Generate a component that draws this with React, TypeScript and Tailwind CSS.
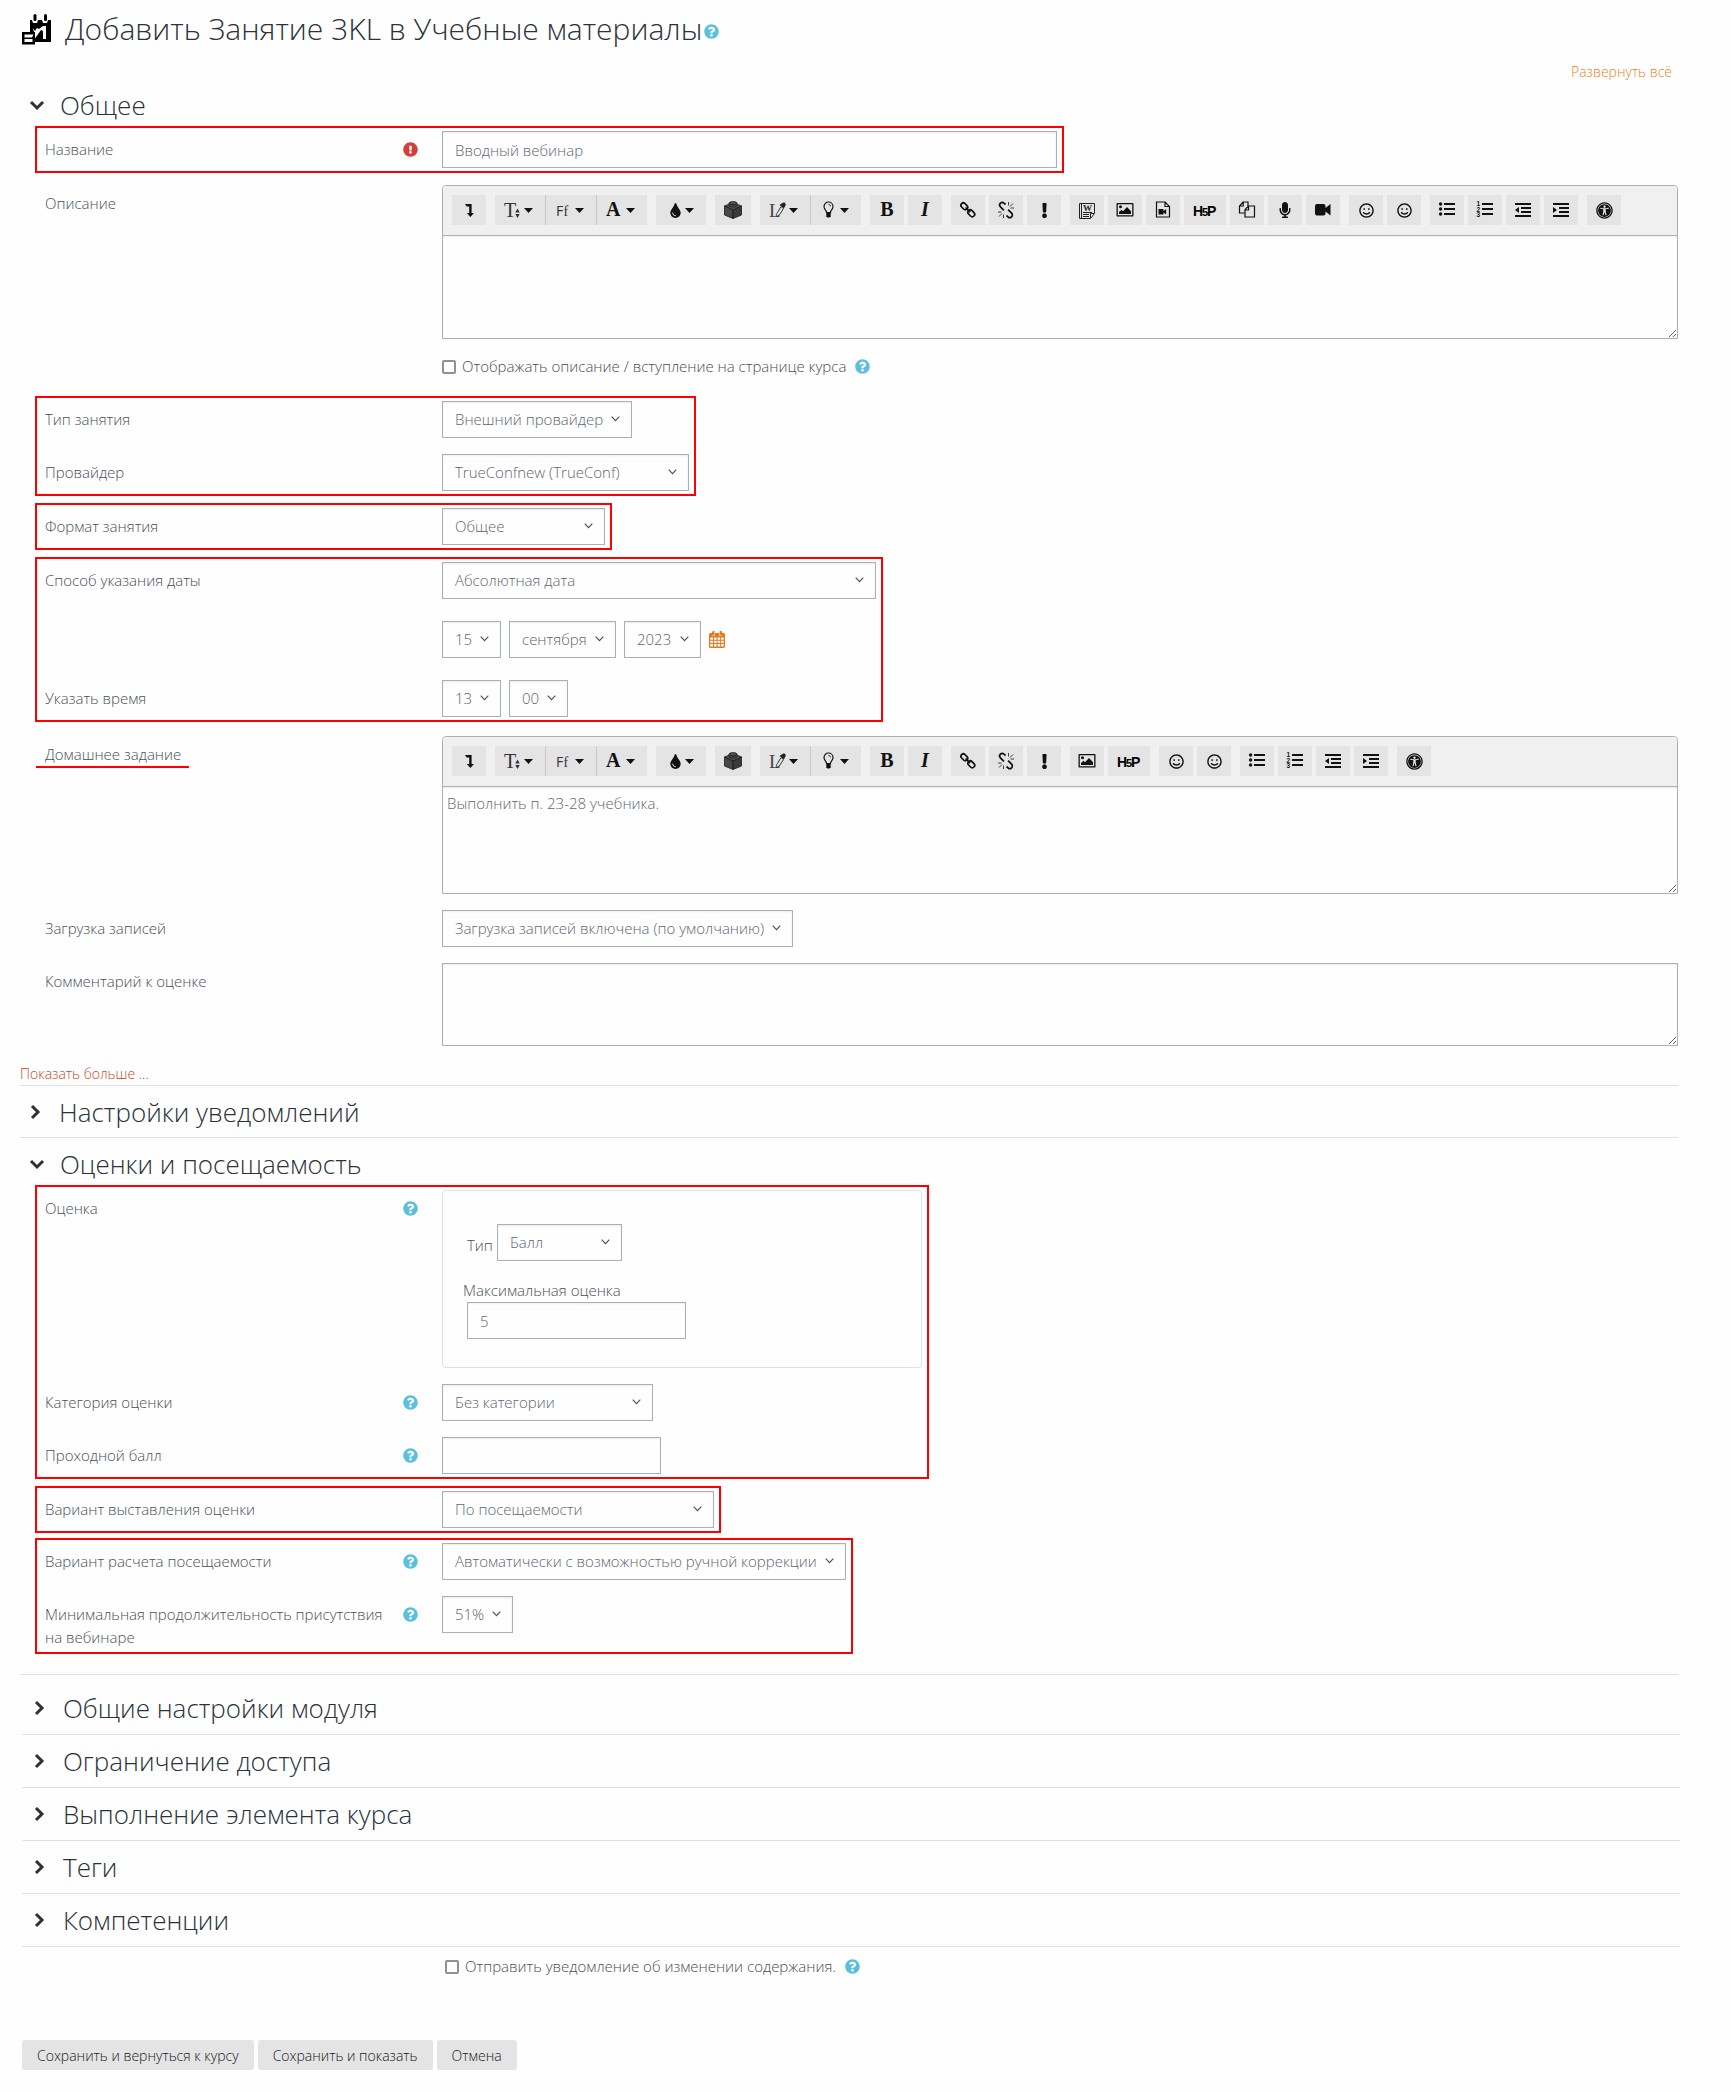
import type { ReactNode } from "react";
import { FaExclamation, FaExclamationCircle, FaMicrophone, FaQuestionCircle, FaRegSmile, FaTint, FaUniversalAccess } from "react-icons/fa";

function Help() {
  return (
    <button type="button" aria-label="Справка" className="shrink-0 text-[#5bc0de]">
      <FaQuestionCircle size={15} />
    </button>
  );
}

function Row({ label, id, icon, underline, children }: { label?: string; id?: string; icon?: ReactNode; underline?: boolean; children: ReactNode }) {
  return (
    <div className="flex items-start">
      <div className="flex w-[397px] shrink-0 items-start justify-between gap-3 pt-[7px] pr-6">
        <label htmlFor={id} className={underline ? "-ml-[9px] border-b-2 border-[#f00] pr-2 pl-[9px]" : ""}>
          {label}
        </label>
        {icon && <span className="flex h-[23px] items-center">{icon}</span>}
      </div>
      <div className="min-w-0 grow">{children}</div>
    </div>
  );
}

function Marked({ children, className = "" }: { children: ReactNode; className?: string }) {
  return <div className={`ml-[15px] w-fit max-w-full space-y-4 border-2 border-[#f00] py-[3px] pr-[5px] pl-2 ${className}`}>{children}</div>;
}

const field = "h-[37px] w-full border border-[#a8b0b8] bg-transparent px-3 text-[#5f676f] shadow-[inset_0_1px_2px_rgba(0,0,0,0.08)]";

function Select({ id, value, width, label }: { id: string; value: string; width: string; label?: string }) {
  return (
    <div className={`relative ${width}`}>
      <select id={id} aria-label={label} className={`${field} appearance-none`}>
        <option>{value}</option>
      </select>
      <svg className="pointer-events-none absolute top-[15px] right-3 h-[6px] w-[9px]" viewBox="0 0 9 6" fill="none" stroke="#4a4f55" strokeWidth="1.1">
        <path d="M.7.7l3.8 4L8.3.7" />
      </svg>
    </div>
  );
}

/* Editor icons */

const svg = "h-5 w-5";
const serif = "font-['Liberation_Serif',serif] text-[20px] leading-[28px] pb-[2px] font-bold";

function Lines({ kind }: { kind: "ul" | "ol" | "outdent" | "indent" }) {
  const list = kind === "ul" || kind === "ol";
  return (
    <svg viewBox="0 0 20 20" className={svg} fill="currentColor">
      {list ? (
        <path d="M7 3h11v2H7zM7 8h11v2H7zM7 13h11v2H7z" />
      ) : (
        <path d="M2 3h16v2H2zM8 7h10v2H8zM8 11h10v2H8zM2 15h16v2H2z" />
      )}
      {kind === "ul" && [4, 9, 14].map((y) => <circle key={y} cx="3.6" cy={y} r="1.7" />)}
      {kind === "ol" &&
        ["1", "2", "3"].map((n, i) => (
          <text key={n} x="1.5" y={6 + i * 5.5} fontSize="6.5" fontWeight="700" fontFamily="Liberation Sans">
            {n}
          </text>
        ))}
      {kind === "outdent" && <path d="M6 7v6l-4-3z" />}
      {kind === "indent" && <path d="M2 7v6l4-3z" />}
    </svg>
  );
}

const icons: Record<string, ReactNode> = {
  toggle: (
    <svg viewBox="0 0 20 20" className={svg} fill="currentColor">
      <path d="M6 4h6.6v9H15l-3.6 4L7.8 13h2.4V6.4H7.6z" />
    </svg>
  ),
  size: (
    <svg viewBox="0 0 20 24" className="h-6 w-5" fill="#333">
      <text x="0" y="19" fontSize="20" fontFamily="Liberation Serif" fontWeight="400">T</text>
      <path d="M13.500 10.500l2.200 4h-4.400zM13.500 20l2.200-4h-4.400z" />
    </svg>
  ),
  family: (
    <svg viewBox="0 0 20 20" className={svg} fill="#333">
      <text x="1" y="16" fontSize="14" fontFamily="Open Sans" fontWeight="400">F</text>
      <text x="8.500" y="16" fontSize="14" fontFamily="Liberation Serif" fontWeight="400">f</text>
    </svg>
  ),
  color: <span className={`w-5 text-left ${serif}`}>A</span>,
  drop: (
    <span className="flex w-5 justify-center">
      <FaTint size={15} />
    </span>
  ),
  block: (
    <svg viewBox="0 0 20 20" className={svg} stroke="#1b1b1b" strokeWidth=".8" strokeLinejoin="round">
      <path fill="#555" d="M10 2.500l8.500 3.500-8.500 4-8.500-4z" />
      <path fill="#484848" d="M1.500 6l8.500 4v8.500L1.500 15z" />
      <path fill="#3a3a3a" d="M18.500 6L10 10v8.500l8.500-3.500z" />
      <path fill="#4a4a4a" d="M6 3.200v2.300c0 2 8 2 8 0V3.200z" />
      <ellipse fill="#555" cx="10" cy="3.200" rx="4" ry="1.600" />
    </svg>
  ),
  clear: (
    <svg viewBox="0 0 20 24" className="h-6 w-5">
      <text x="0" y="19" fontSize="19" fontFamily="Liberation Serif" fontWeight="400" fill="#444">L</text>
      <path d="M7.500 18.500c-.5-1.500 0-3 1-4l3.500-6 2.500 2-3.700 5.800c-.8 1-2 1.700-3.300 2.200z" fill="#e4e4e4" stroke="#222" strokeWidth=".9" />
      <path d="M10.500 7l4.500 3.200 1.300-2.400c1.600-2-1.200-4.800-3.200-2.600z" fill="#222" />
    </svg>
  ),
  bulb: (
    <svg viewBox="0 0 20 20" className={svg} fill="none" stroke="currentColor" strokeWidth="1.200">
      <path d="M6.500 12.500c0-2.500-2.500-3-2.500-6a4.500 4.500 0 0 1 9 0c0 3-2.500 3.500-2.500 6z" />
      <path d="M8.500 4.500c1.200 0 2 .8 2 1.800" strokeWidth=".9" />
      <path d="M6.300 13h4.400v3.200L9.500 17.500h-2l-1.200-1.300z" fill="currentColor" stroke="none" />
    </svg>
  ),
  bold: <span className={serif}>B</span>,
  italic: <span className={`italic ${serif}`}>I</span>,
  link: (
    <svg viewBox="0 0 20 20" className={svg} fill="none" stroke="currentColor" strokeWidth="1.700">
      <rect x="2.500" y="3.900" width="7.600" height="4.800" rx="2.400" transform="rotate(45 6.300 6.300)" />
      <rect x="9.500" y="10.900" width="7.600" height="4.800" rx="2.400" transform="rotate(45 13.300 13.300)" />
      <path d="M7.500 7.500l4.600 4.600" />
    </svg>
  ),
  unlink: (
    <svg viewBox="0 0 20 20" className={svg} fill="none" stroke="currentColor" strokeWidth="1.700">
      <path d="M9.500 4.500L8 3.200a2.500 2.500 0 0 0-3.600 3.600l3.500 3.500" />
      <path d="M10.500 15.500l1.500 1.300a2.500 2.500 0 0 0 3.600-3.600l-3.500-3.500" />
      <path d="M12.500 2v3.500M14 6.500l3-3M14.500 8H18M7.500 18v-3.500M6 13.500l-3 3M5.500 12H2" strokeWidth=".8" />
    </svg>
  ),
  important: <FaExclamation size={15} />,
  word: (
    <svg viewBox="0 0 20 20" className={svg} fill="none" stroke="#222">
      <path d="M2.500 3.500h15v10l-4 5h-11zM4.500 3.500v15M17 13.500h-3.500v4.500M6 12.500h9M6 14.500h6M6 16.500h6" />
      <text x="6" y="11" fontSize="9" fontWeight="700" fontFamily="Liberation Serif" fill="#222" stroke="none">W</text>
    </svg>
  ),
  image: (
    <svg viewBox="0 0 20 20" className={svg} fill="currentColor">
      <path d="M2.500 3h15c.7 0 1 .3 1 1v11.500c0 .7-.3 1-1 1h-15c-.7 0-1-.3-1-1V4c0-.7.3-1 1-1zm.300 1.300v10.900h14.400V4.300z" />
      <circle cx="5.500" cy="6.800" r="1.500" />
      <path d="M4 14v-2l2.500-2.200L8 11.200l4-4.200 4 4.200V14z" />
    </svg>
  ),
  media: (
    <svg viewBox="0 0 20 20" className={svg} fill="none" stroke="currentColor" strokeWidth="1.200">
      <path d="M3.500 2h8.500l4.500 4.500V17h-13zM12 2v4.500h4.500" />
      <path d="M5.500 9h5v2l2.700-2v5.500l-2.700-2v2h-5z" fill="currentColor" stroke="none" />
    </svg>
  ),
  h5p: (
    <svg viewBox="0 0 26 20" className="h-5 w-[26px]" fill="#000" fontFamily="Liberation Sans" fontWeight="700">
      <text x="1" y="16" fontSize="14">H</text>
      <text x="10" y="16" fontSize="11">5</text>
      <text x="15" y="16" fontSize="14">P</text>
    </svg>
  ),
  copy: (
    <svg viewBox="0 0 20 20" className={svg} fill="none" stroke="currentColor" strokeWidth="1.200">
      <path d="M8 13H2.500V6L6 2h5v4M6.200 2v4H2.500" />
      <path d="M8 17V9.700L11.500 6h6v11zM11.500 6v4H8" />
    </svg>
  ),
  mic: <FaMicrophone size={16} />,
  video: (
    <svg viewBox="0 0 20 20" className={svg} fill="currentColor">
      <path d="M4 4h6.500a2 2 0 0 1 2 2v2L17.500 4v11.500l-5-4v2a2 2 0 0 1-2 2H4a2 2 0 0 1-2-2V6a2 2 0 0 1 2-2z" />
    </svg>
  ),
  smile: <FaRegSmile size={15} />,
  emoji: <FaRegSmile size={15} />,
  ul: <Lines kind="ul" />,
  ol: <Lines kind="ol" />,
  outdent: <Lines kind="outdent" />,
  indent: <Lines kind="indent" />,
  access: <FaUniversalAccess size={17} />,
};

const menus = ["size", "family", "color", "drop", "clear", "bulb"];
const common = [["toggle"], ["size", "family", "color"], ["drop"], ["block"], ["clear", "bulb"], ["bold", "italic"], ["link", "unlink", "important"]];
const tail = [["smile", "emoji"], ["ul", "ol", "outdent", "indent"], ["access"]];
const fullTools = [...common, ["word", "image", "media", "h5p", "copy", "mic", "video"], ...tail];
const shortTools = [...common, ["image", "h5p"], ...tail];

function Tool({ name }: { name: string }) {
  if (menus.includes(name)) {
    return (
      <button type="button" aria-label={name} className="flex h-[30px] w-[51px] items-center border-l border-[#c9c9c9] bg-[#e4e4e4] pl-[9px] first:w-[50px] first:border-l-0">
        {icons[name]}
        <svg viewBox="0 0 9 5" className="h-[5px] w-[9px]" fill="currentColor">
          <path d="M0 0h9L4.500 5z" />
        </svg>
      </button>
    );
  }
  const width = name === "h5p" ? "w-[42px]" : name === "block" ? "w-9" : "w-[34px]";
  return (
    <button type="button" aria-label={name} className={`flex h-[30px] items-center justify-center bg-[#e4e4e4] ${width}`}>
      {icons[name]}
    </button>
  );
}

function Editor({ id, tools, value, height }: { id: string; tools: string[][]; value?: string; height: string }) {
  return (
    <div className="overflow-hidden rounded-t border border-[#a8b0b8]">
      <div className="flex flex-wrap gap-[9px] border-b border-[#a8b0b8] bg-[#f0f0f0] px-[9px] pt-[9px] pb-[10px] text-[#111]">
        {tools.map((group) => (
          <div key={group[0]} className={menus.includes(group[0]) ? "flex" : "flex gap-1"}>
            {group.map((name) => (
              <Tool key={name} name={name} />
            ))}
          </div>
        ))}
      </div>
      <textarea id={id} defaultValue={value} className={`block w-full resize-y px-1 py-[5px] text-[#5f676f] shadow-[inset_0_1px_2px_rgba(0,0,0,0.08)] ${height}`} />
    </div>
  );
}

function Heading({ open, className = "", children }: { open?: boolean; className?: string; children: ReactNode }) {
  return (
    <h3 className={className}>
      <button type="button" aria-expanded={!!open} className="flex items-center gap-[15px] text-[26px] leading-9 text-[#2b3238]">
        <svg viewBox="0 0 16 16" className="h-4 w-4" fill="none" stroke="currentColor" strokeWidth="3">
          {open ? <path d="M2 5l6 6 6-6" /> : <path d="M4 2l6 6-6 6" />}
        </svg>
        {children}
      </button>
    </h3>
  );
}

const closed = ["Общие настройки модуля", "Ограничение доступа", "Выполнение элемента курса", "Теги", "Компетенции"];

function Check({ id, children }: { id: string; children: ReactNode }) {
  return (
    <div className="flex items-center">
      <input id={id} type="checkbox" className="mr-[6px] h-[14px] w-[14px] appearance-none rounded-[2px] border-2 border-[#8f8f9d] bg-white" />
      <label htmlFor={id} className="mr-[9px]">
        {children}
      </label>
      <Help />
    </div>
  );
}

export default function App() {
  return (
    <main className="min-h-screen bg-[#fefefe] pt-2 pr-[53px] pb-5 pl-5 font-['Open_Sans',sans-serif] text-[15px] leading-[23px] font-light text-[#495057]">
      <header className="flex items-center text-[#2b3238]">
        <svg viewBox="0 0 30 31" className="mr-[13px] ml-[2px] h-[31px] w-[30px]">
          <path d="M8 6h2l1 3h4l1-3h4l1 3h4l1-3h3v22H14V18H8z" />
          <rect x="11.500" y="0" width="3" height="7" rx="1.500" />
          <rect x="22" y="0" width="3" height="7" rx="1.500" />
          <path d="M11 14l2 3 2-3 2 1 4-3h3v13h-3V17l-3 5-2 5h-2z" fill="#fefefe" />
          <path d="M12 26l7-10 2 1-5 11h-4z" />
          <path d="M0 18h13v12.500H0z" />
          <path d="M2.500 20.500h9l-1.500 3H2.500zM2.500 25h8v3h-8z" fill="#fefefe" />
        </svg>
        <h1 className="text-[30px] leading-[42px]">Добавить Занятие 3KL в Учебные материалы</h1>
        <span className="ml-[2px] flex pt-1">
          <Help />
        </span>
      </header>

      <div className="mt-[10px] pr-[6px] text-right">
        <a href="#" className="text-[14px] text-[#ee8420]">
          Развернуть всё
        </a>
      </div>

      <form>
        <Heading open className="mt-1 mb-[3px] pl-[9px]">
          Общее
        </Heading>
        <Marked>
          <Row label="Название" id="name" icon={<FaExclamationCircle size={15} className="text-[#d43f3a]" />}>
            <div className="w-[615px]">
              <input id="name" type="text" defaultValue="Вводный вебинар" className={field} />
            </div>
          </Row>
        </Marked>

        <div className="mt-3 mb-[18px] space-y-4 pl-[25px]">
          <Row label="Описание" id="intro">
            <Editor id="intro" tools={fullTools} height="h-[102px]" />
          </Row>
          <div className="pl-[397px]">
            <Check id="show">Отображать описание / вступление на странице курса</Check>
          </div>
        </div>

        <Marked>
          <Row label="Тип занятия" id="type">
            <Select id="type" value="Внешний провайдер" width="w-[190px]" />
          </Row>
          <Row label="Провайдер" id="provider">
            <Select id="provider" value="TrueConfnew (TrueConf)" width="w-[247px]" />
          </Row>
        </Marked>
        <Marked className="mt-[7px]">
          <Row label="Формат занятия" id="format">
            <Select id="format" value="Общее" width="w-[163px]" />
          </Row>
        </Marked>
        <Marked className="mt-[7px]">
          <Row label="Способ указания даты" id="datemode">
            <Select id="datemode" value="Абсолютная дата" width="w-[434px]" />
          </Row>
          <div className="mt-[22px] mb-[22px] ml-[397px] flex items-center gap-2">
            <Select id="day" label="День" value="15" width="w-[59px]" />
            <Select id="month" label="Месяц" value="сентября" width="w-[107px]" />
            <Select id="year" label="Год" value="2023" width="w-[77px]" />
            <button type="button" aria-label="Календарь" className="text-[#e8791a]">
              <svg viewBox="0 0 16 17" className="h-[17px] w-4" fill="currentColor">
                <path d="M4 0h1.500v4H3V1zM11 0h1.500l.5 1v3h-2.500V1z" />
                <path d="M1 2h2v2.500h3V2h4v2.500h3V2h2l1 1v13l-1 1H1l-1-1V3z" />
                <path d="M1.300 6.500H4v2.300H1.300zM5 6.500h2.600v2.300H5zM8.600 6.500h2.600v2.300H8.600zM12.200 6.500h2.500v2.300h-2.500zM1.300 9.700H4V12H1.300zM5 9.700h2.600V12H5zM8.600 9.700h2.600V12H8.600zM12.200 9.700h2.500V12h-2.500zM1.300 13H4v2.600H1.300zM5 13h2.600v2.600H5zM8.600 13h2.600v2.600H8.600zM12.200 13h2.500v2.600h-2.500z" fill="#fff" />
              </svg>
            </button>
          </div>
          <Row label="Указать время" id="hour">
            <div className="flex gap-2">
              <Select id="hour" value="13" width="w-[59px]" />
              <Select id="minute" label="Минуты" value="00" width="w-[59px]" />
            </div>
          </Row>
        </Marked>

        <div className="mt-[14px] space-y-4 pl-[25px]">
          <Row label="Домашнее задание" id="homework" underline>
            <Editor id="homework" tools={shortTools} value="Выполнить п. 23-28 учебника." height="h-[106px]" />
          </Row>
          <Row label="Загрузка записей" id="records">
            <Select id="records" value="Загрузка записей включена (по умолчанию)" width="w-[351px]" />
          </Row>
          <Row label="Комментарий к оценке" id="comment">
            <textarea id="comment" className="block h-[83px] w-full resize-y border border-[#a8b0b8] px-3 py-1 shadow-[inset_0_1px_2px_rgba(0,0,0,0.08)]" />
          </Row>
        </div>
        <div className="mt-4">
          <a href="#" className="text-[14px] text-[#c8481c]">
            Показать больше ...
          </a>
        </div>

        <Heading className="border-t border-[#dee2e6] pt-2 pb-[7px] pl-2">Настройки уведомлений</Heading>
        <Heading open className="border-t border-[#dee2e6] pt-2 pb-[3px] pl-[9px]">
          Оценки и посещаемость
        </Heading>

        <Marked>
          <Row label="Оценка" icon={<Help />}>
            <fieldset className="h-[178px] w-[480px] rounded border border-[#dee2e6] px-6 pt-[33px]">
              <div className="flex items-end gap-1">
                <label htmlFor="gradetype" className="pb-1">
                  Тип
                </label>
                <Select id="gradetype" value="Балл" width="w-[125px]" />
              </div>
              <label htmlFor="maxgrade" className="mt-[18px] -ml-1 block">
                Максимальная оценка
              </label>
              <div className="w-[219px]">
                <input id="maxgrade" type="text" defaultValue="5" className={field} />
              </div>
            </fieldset>
          </Row>
          <Row label="Категория оценки" id="category" icon={<Help />}>
            <Select id="category" value="Без категории" width="w-[211px]" />
          </Row>
          <Row label="Проходной балл" id="pass" icon={<Help />}>
            <div className="w-[219px]">
              <input id="pass" type="text" className={field} />
            </div>
          </Row>
        </Marked>
        <Marked className="mt-[7px]">
          <Row label="Вариант выставления оценки" id="grading">
            <Select id="grading" value="По посещаемости" width="w-[272px]" />
          </Row>
        </Marked>
        <Marked className="mt-[5px]">
          <Row label="Вариант расчета посещаемости" id="attendance" icon={<Help />}>
            <Select id="attendance" value="Автоматически с возможностью ручной коррекции" width="w-[404px]" />
          </Row>
          <Row label="Минимальная продолжительность присутствия на вебинаре" id="duration" icon={<Help />}>
            <Select id="duration" value="51%" width="w-[71px]" />
          </Row>
        </Marked>

        <div className="mt-5 border-t border-[#dee2e6] pt-[7px]">
          <div className="-mr-[2px] ml-[2px]">
            {closed.map((title) => (
              <Heading key={title} className="border-b border-[#dee2e6] py-2 pl-[10px]">
                {title}
              </Heading>
            ))}
          </div>
        </div>

        <div className="mt-2 pl-[425px]">
          <Check id="notify">Отправить уведомление об изменении содержания.</Check>
        </div>
        <div className="mt-[62px] ml-[2px] flex gap-1">
          {["Сохранить и вернуться к курсу", "Сохранить и показать", "Отмена"].map((text) => (
            <button key={text} type="button" className="h-[30px] rounded-[3px] bg-[#e4e4e4] px-[15px] text-[14px] text-[#16191c]">
              {text}
            </button>
          ))}
        </div>
      </form>
    </main>
  );
}
